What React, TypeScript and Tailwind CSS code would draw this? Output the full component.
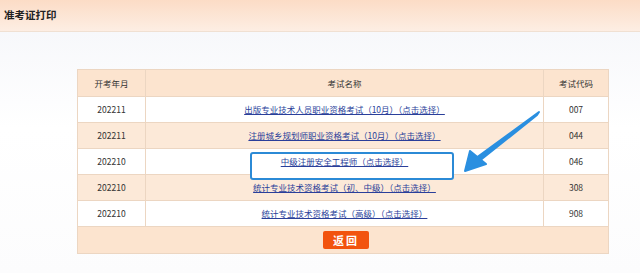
import React from "react";

const rows = [
  { d: "202211", n: "出版专业技术人员职业资格考试（10月）（点击选择）", c: "007" },
  { d: "202211", n: "注册城乡规划师职业资格考试（10月）（点击选择）", c: "044" },
  { d: "202210", n: "中级注册安全工程师（点击选择）", c: "046", hl: true },
  { d: "202210", n: "统计专业技术资格考试（初、中级）（点击选择）", c: "308" },
  { d: "202210", n: "统计专业技术资格考试（高级）（点击选择）", c: "908" },
];

export default function App() {
  return (
    <div
      className="relative w-[640px] h-[273px] overflow-hidden bg-white text-[#333]"
      style={{ fontFamily: '"Noto Sans CJK SC", "Liberation Sans", sans-serif' }}
    >
      <div className="h-[32px] flex items-center pl-[4px] pb-[2px] bg-[linear-gradient(180deg,#fcdcc6_0%,#fdeee3_100%)] border-b border-[#f0e0d2]">
        <span className="text-[10.5px] font-bold text-[#222]">准考证打印</span>
      </div>
      <div className="h-[241px] bg-[linear-gradient(180deg,#f7f8fb_0%,#ffffff_40%,#fcfcfd_100%)] pt-[37px] pl-[77px]">
        <div className="w-[532px] border border-[#ecd6c2] text-[8.5px]">
          <div className="flex h-[27px] bg-[#fce4cf] border-b border-[#ecd6c2]">
            <div className="w-[68px] flex items-center justify-center border-r border-[#ecd6c2]">开考年月</div>
            <div className="w-[398px] flex items-center justify-center border-r border-[#ecd6c2]">考试名称</div>
            <div className="flex-1 flex items-center justify-center">考试代码</div>
          </div>
          {rows.map((r, i) => (
            <div
              key={i}
              className={`flex h-[26px] border-b border-[#ecd6c2] ${i % 2 === 1 ? "bg-[#fce9d8]" : "bg-white"}`}
            >
              <div className="w-[68px] flex items-center justify-center border-r border-[#ecd6c2]">{r.d}</div>
              <div className="relative w-[398px] flex items-center justify-center border-r border-[#ecd6c2]">
                {r.hl && (
                  <div className="absolute left-[104px] top-[3px] w-[204px] h-[28px] rounded-[3px] border-2 border-[#2b8ad6] bg-white z-10" />
                )}
                <span className="relative z-20 text-[#2a3f9a] underline">{r.n}</span>
              </div>
              <div className="flex-1 flex items-center justify-center">{r.c}</div>
            </div>
          ))}
          <div className="h-[26px] bg-[#fce4cf] flex items-center justify-center">
            <div className="w-[46px] h-[18px] ml-[6px] rounded-[2px] bg-[#f2530e] text-white text-[11px] font-bold flex items-center justify-center tracking-[2px]">
              返回
            </div>
          </div>
        </div>
      </div>
      <svg className="absolute left-0 top-0 z-30" width="640" height="273" viewBox="0 0 640 273">
        <path d="M539 112 L537 115 L478 162 L476 158 Z" fill="#2a8fe0" stroke="#2a8fe0" strokeWidth="2" strokeLinejoin="round" />
        <path d="M465 171 L470 151 L486 164 Z" fill="#2a8fe0" stroke="#2a8fe0" strokeWidth="2" strokeLinejoin="round" />
      </svg>
    </div>
  );
}
